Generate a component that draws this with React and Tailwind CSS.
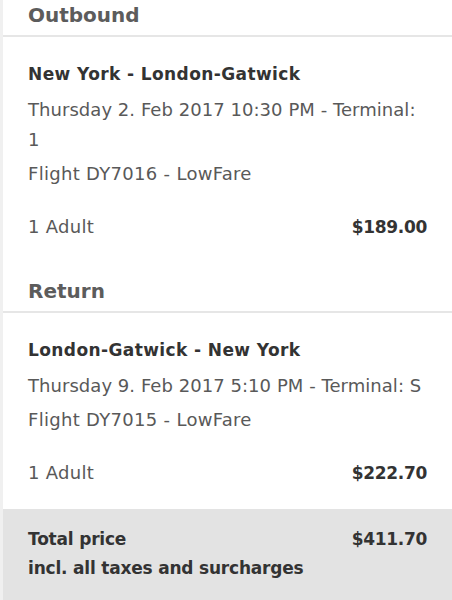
const legs = [
  {
    title: 'Outbound',
    route: 'New York - London-Gatwick',
    date: 'Thursday 2. Feb 2017 10:30 PM - Terminal: 1',
    flight: 'Flight DY7016 - LowFare',
    price: '$189.00',
    nowrap: false,
  },
  {
    title: 'Return',
    route: 'London-Gatwick - New York',
    date: 'Thursday 9. Feb 2017 5:10 PM - Terminal: S',
    flight: 'Flight DY7015 - LowFare',
    price: '$222.70',
    nowrap: true,
  },
]

function Leg({ leg, first }) {
  return (
    <div>
      <div className={`px-[25px] ${first ? 'pt-0' : 'pt-[13px]'} pb-[5px]`}>
        <h2 className="text-[20px] leading-[30px] font-bold text-[#5c5c5c]">{leg.title}</h2>
      </div>
      <div className="h-[2px] bg-[#e6e6e6]" />
      <div className="px-[25px] pt-[22px] pb-[21px]">
        <p className="text-[17px] leading-[30px] font-bold tracking-[0.4px] text-[#333]">{leg.route}</p>
        <p className={`text-[18px] leading-[30px] tracking-[0.05px] text-[#595959] mt-[6px] ${leg.nowrap ? 'whitespace-nowrap' : ''}`}>{leg.date}</p>
        <p className="text-[18px] leading-[30px] tracking-[0.3px] text-[#595959] mt-[4px]">{leg.flight}</p>
        <div className="flex justify-between items-center mt-[23px]">
          <span className="text-[18px] leading-[30px] tracking-[0.3px] text-[#595959]">1 Adult</span>
          <span className="text-[17px] leading-[30px] font-bold tracking-[-0.3px] text-[#333]">{leg.price}</span>
        </div>
      </div>
    </div>
  )
}

export default function App() {
  return (
    <div className="w-[452px] h-[600px] overflow-hidden bg-white border-l-[3px] border-[#f0f0f0]" style={{ fontFamily: '"DejaVu Sans", "Liberation Sans", sans-serif' }}>
      {legs.map((leg, i) => <Leg key={i} leg={leg} first={i === 0} />)}
      <div className="bg-[#e3e3e3] px-[25px] pt-[16px] pb-[40px] flex justify-between">
        <div className="text-[17px] leading-[29px] font-bold tracking-[-0.2px] text-[#333]">
          <p>Total price</p>
          <p>incl. all taxes and surcharges</p>
        </div>
        <span className="text-[17px] leading-[29px] font-bold tracking-[-0.3px] text-[#333]">$411.70</span>
      </div>
    </div>
  )
}
